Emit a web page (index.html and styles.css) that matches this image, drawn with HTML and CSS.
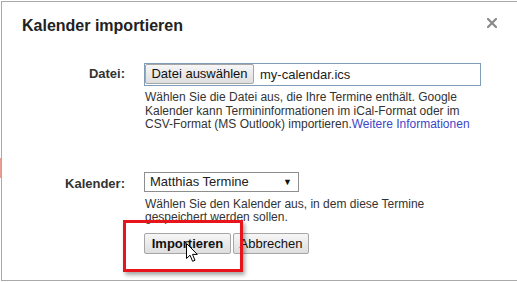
FILE: index.html
```html
<!DOCTYPE html>
<html lang="de">
<head>
<meta charset="utf-8">
<title>Kalender importieren</title>
<link rel="stylesheet" href="styles.css">
</head>
<body>
<div class="page">
  <div class="dialog">
    <div class="header">
      <h1 class="title">Kalender importieren</h1>
      <svg class="close" width="10" height="10" viewBox="0 0 10 10" aria-label="Schließen">
        <path d="M1 1 L9 9 M9 1 L1 9" stroke="#8a8a8a" stroke-width="2.2" stroke-linecap="square"/>
      </svg>
    </div>
    <div class="form">
      <div class="label label-file">Datei:</div>
      <div class="field">
        <div class="file">
          <span class="btn file-btn">Datei auswählen</span>
          <span class="file-name">my-calendar.ics</span>
        </div>
        <p class="help help-file">Wählen Sie die Datei aus, die Ihre Termine enthält. Google<br>Kalender kann Termininformationen im iCal-Format oder im<br>CSV-Format (MS Outlook) importieren.<a class="link" href="#">Weitere Informationen</a></p>
      </div>

      <div class="label label-cal">Kalender:</div>
      <div class="field field-cal">
        <div class="select">
          <span class="select-text">Matthias Termine</span>
          <span class="select-arrow">▼</span>
        </div>
        <p class="help help-cal">Wählen Sie den Kalender aus, in dem diese Termine<br>gespeichert werden sollen.</p>
        <div class="actions">
          <span class="btn btn-primary">Importieren</span>
          <span class="btn btn-cancel">Abbrechen</span>
          <div class="highlight"></div>
          <svg class="cursor" width="13" height="20" viewBox="0 0 13 20">
            <path d="M0.5 0.5 L0.5 15.5 L4 12.2 L6.6 18.3 L9 17.3 L6.5 11.4 L11.3 11.4 Z" fill="#fff" stroke="#000" stroke-width="1" stroke-linejoin="miter"/>
          </svg>
        </div>
      </div>
    </div>
  </div>
</div>
</body>
</html>
```

FILE: styles.css
```css
html, body {
  margin: 0;
  padding: 0;
  overflow: hidden;
}

body {
  width: 517px;
  height: 282px;
  background: #fff linear-gradient(to bottom, #fff 158px, #e9a092 158px, #e9a092 178px, #fff 178px) no-repeat 0 0 / 1px 100%;
  font-family: "Liberation Sans", Arial, sans-serif;
  font-size: 13px;
  color: #222;
}

.page {
  padding: 1px 0 0 1px;
}

.dialog {
  height: 278px;
  border: 1px solid #a9a9a9;
  border-right: none;
  background: #fff;
}

.header {
  display: flex;
  align-items: flex-start;
  padding: 14px 20px 0 20px;
}

.title {
  margin: 0;
  flex: 1;
  font-size: 16px;
  line-height: 19px;
  font-weight: bold;
  color: #222;
}

.close {
  margin-top: 2px;
  display: block;
}

.form {
  display: grid;
  grid-template-columns: 123px 337px;
  column-gap: 19px;
  margin-top: 28px;
}

.label {
  text-align: right;
  font-weight: bold;
  color: #333;
  line-height: 15px;
}

.label-file {
  padding-top: 3px;
}

.label-cal {
  padding-top: 4px;
  margin-top: 40px;
}

.field {
  min-width: 0;
}

.field-cal {
  margin-top: 40px;
}

.file {
  display: flex;
  align-items: center;
  height: 21px;
  border: 1px solid #7f9db9;
}

.btn {
  display: inline-block;
  box-sizing: border-box;
  height: 21px;
  line-height: 19px;
  padding: 0 8px;
  border: 1px solid #a6a6a6;
  border-radius: 2px;
  background: linear-gradient(to bottom, #f6f6f6, #dedede);
  color: #111;
  text-align: center;
}

.file-btn {
  height: 20px;
  line-height: 18px;
  width: 109px;
  padding: 0;
  margin-top: -1px;
}

.file-name {
  margin-left: 6px;
  color: #222;
}

.help {
  margin: 5px 0 0 1px;
  font-size: 12px;
  line-height: 13.5px;
  color: #333;
  white-space: nowrap;
}

.link {
  color: #3d44c8;
  text-decoration: none;
}

.select {
  display: flex;
  align-items: center;
  justify-content: space-between;
  box-sizing: border-box;
  width: 155px;
  height: 20px;
  border: 1px solid #8e8e8e;
  padding: 0 6px 0 5px;
  color: #222;
}

.select-arrow {
  font-size: 9px;
  color: #111;
}

.help-cal {
  margin-top: 6px;
}

.actions {
  position: relative;
  display: flex;
  gap: 2px;
  margin-top: 8px;
}

.btn-primary {
  font-weight: bold;
  width: 87px;
  padding: 0;
}

.btn-cancel {
  width: 76px;
  padding: 0;
}

.highlight {
  position: absolute;
  left: -21px;
  top: -13px;
  width: 120px;
  height: 52px;
  box-sizing: border-box;
  border: 3px solid #e8141b;
  box-shadow: 2px 3px 4px rgba(0, 0, 0, 0.35);
}

.cursor {
  position: absolute;
  left: 42px;
  top: 10px;
}
```
